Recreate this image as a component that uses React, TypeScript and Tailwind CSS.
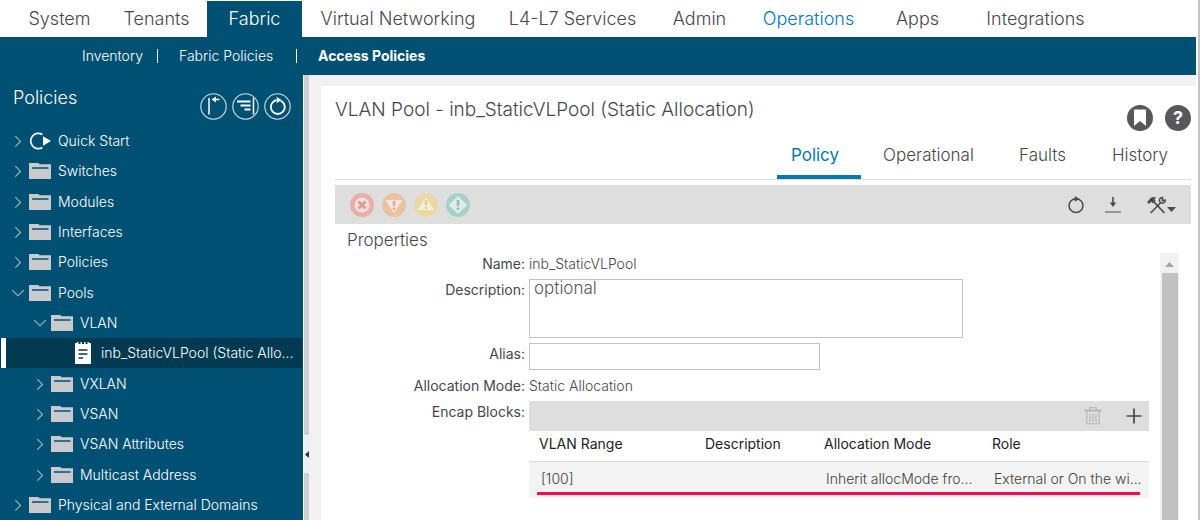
import { Fragment } from 'react'
import type { ReactNode } from 'react'

type TreeItem = {
  label: string
  depth: 0 | 1 | 2
  icon: 'quick' | 'folder' | 'pool'
  open?: boolean
  selected?: boolean
}

const mainMenu = [
  { label: 'System', width: 'w-[93px]' },
  { label: 'Tenants', width: 'w-[101px]' },
  { label: 'Fabric', width: 'w-[95px]', active: true },
  { label: 'Virtual Networking', width: 'w-[192px]' },
  { label: 'L4-L7 Services', width: 'w-[157px]' },
  { label: 'Admin', width: 'w-[97px]' },
  { label: 'Operations', width: 'w-[121px]', hover: true },
  { label: 'Apps', width: 'w-[97px]' },
  { label: 'Integrations', width: 'w-[139px]' },
]

const subMenu = [
  { label: 'Inventory', width: 'w-[62px]' },
  { label: 'Fabric Policies', width: 'w-[104px]' },
  { label: 'Access Policies', width: 'w-28', active: true },
]

const tree: TreeItem[] = [
  { label: 'Quick Start', depth: 0, icon: 'quick' },
  { label: 'Switches', depth: 0, icon: 'folder' },
  { label: 'Modules', depth: 0, icon: 'folder' },
  { label: 'Interfaces', depth: 0, icon: 'folder' },
  { label: 'Policies', depth: 0, icon: 'folder' },
  { label: 'Pools', depth: 0, icon: 'folder', open: true },
  { label: 'VLAN', depth: 1, icon: 'folder', open: true },
  { label: 'inb_StaticVLPool (Static Allo...', depth: 2, icon: 'pool', selected: true },
  { label: 'VXLAN', depth: 1, icon: 'folder' },
  { label: 'VSAN', depth: 1, icon: 'folder' },
  { label: 'VSAN Attributes', depth: 1, icon: 'folder' },
  { label: 'Multicast Address', depth: 1, icon: 'folder' },
  { label: 'Physical and External Domains', depth: 0, icon: 'folder' },
]

const tabs = [
  { label: 'Policy', width: 'w-[84px]', active: true },
  { label: 'Operational', width: 'w-[135px]' },
  { label: 'Faults', width: 'w-[93px]' },
  { label: 'History', width: 'w-[102px]' },
]

const indent = { 0: 'pl-[11px]', 1: 'pl-[33px]', 2: 'pl-[55px]' }

const Chevron = ({ open }: { open?: boolean }) => (
  <svg viewBox="0 0 14 14" className="size-[14px] shrink-0" fill="none" stroke="#a9bcc6" strokeWidth="1.1">
    {open ? <path d="M1.3 4.2 7 9.8l5.7-5.6" /> : <path d="M4.3 2.2 9.5 7.4l-5.2 5.2" />}
  </svg>
)

const FolderIcon = () => (
  <svg viewBox="0 0 22 16" className="h-4 w-[22px] shrink-0">
    <path d="M0 0h9.2l1.6 1.2H22V16H0z" fill="#c9cacd" />
    <path d="M3 5h16.5" stroke="#005073" strokeWidth="1.5" />
  </svg>
)

const QuickStartIcon = () => (
  <svg viewBox="0 0 22 18" className="h-[18px] w-[22px] shrink-0">
    <path d="M13.4 2.4A7.7 7.7 0 1 0 13.4 15.6" fill="none" stroke="#fff" strokeWidth="1.7" />
    <path d="M14 4.2 22 9l-8 4.8z" fill="#fff" />
  </svg>
)

const PoolIcon = () => (
  <svg viewBox="0 0 16 22" className="h-[22px] w-4 shrink-0">
    <path d="M0 1h2V0h1.5v2h2V0H7v2h2V0h1.5v2h2V0H14v1h2v21H0z" fill="#fff" />
    <path d="M3.5 8h9M3.5 12h9M3.5 16h4.5" stroke="#023a52" strokeWidth="1.5" />
  </svg>
)

const treeIcons = { quick: <QuickStartIcon />, folder: <FolderIcon />, pool: <PoolIcon /> }

const RoundIcon = ({ label, children }: { label: string; children: ReactNode }) => (
  <button type="button" aria-label={label} className="size-[27px]">
    <svg viewBox="0 0 27 27" className="size-[27px]" fill="none" stroke="#fff">
      <circle cx="13.5" cy="13.5" r="12.7" strokeWidth="1.1" stroke="#d3dfe5" />
      {children}
    </svg>
  </button>
)

const Severity = ({ label, color, children }: { label: string; color: string; children: ReactNode }) => (
  <button type="button" aria-label={label} className="size-6">
    <svg viewBox="0 0 24 24" className="size-6">
      <circle cx="12" cy="12" r="12" fill={color} />
      {children}
    </svg>
  </button>
)

const Sidebar = () => (
  <aside className="flex w-[303px] shrink-0 flex-col bg-[#005073] text-white">
    <div className="flex h-[51px] items-start pt-[11px] pr-3 pl-[13px]">
      <h2 className="flex-1 text-lg leading-6 font-light">Policies</h2>
      <div className="mt-[7px] flex gap-[5px]">
        <RoundIcon label="Collapse all">
          <path d="M9 5v16.5" strokeWidth="1.5" />
          <path d="M19.5 6.5H13" strokeWidth="1.6" />
          <path d="M11.6 6.5 16 3.6v5.8z" fill="#fff" stroke="none" />
        </RoundIcon>
        <RoundIcon label="Expand to selection">
          <path d="M21.5 5v16.5" strokeWidth="1.5" />
          <path d="M5 8.5h13.5M8.5 12.5h10M12.5 16.5h6" strokeWidth="1.8" />
        </RoundIcon>
        <RoundIcon label="Refresh tree">
          <circle cx="13.8" cy="14" r="7" strokeWidth="1.8" />
          <path d="M12.4 3.4 18 7l-5.6 3.4z" fill="#fff" stroke="#005073" strokeWidth=".5" />
        </RoundIcon>
      </div>
    </div>
    <nav aria-label="Policies" className="grid flex-1 auto-rows-fr">
      {tree.map((item) => (
        <button
          key={item.label}
          type="button"
          aria-expanded={item.icon === 'pool' ? undefined : !!item.open}
          className={
            item.selected
              ? 'relative mr-px flex items-center bg-[#023a52] text-left text-sm'
              : 'flex items-center text-left text-sm'
          }
        >
          {item.selected && <span className="absolute inset-y-0 left-px w-[5px] bg-white"></span>}
          <span className={`${indent[item.depth]} flex flex-1 items-center`}>
            {item.icon === 'pool' ? <span className="w-[14px] shrink-0"></span> : <Chevron open={item.open} />}
            <span className={item.icon === 'pool' ? 'mr-[10px] ml-[6px]' : 'mr-[7px] ml-1'}>{treeIcons[item.icon]}</span>
            <span className="font-light whitespace-nowrap">{item.label}</span>
          </span>
        </button>
      ))}
    </nav>
  </aside>
)

const Splitter = () => (
  <div className="relative w-1.5 shrink-0 border-l border-white bg-[#d0cece]">
    <button
      type="button"
      aria-label="Collapse navigation"
      className="absolute top-[360px] left-0 flex h-[38px] w-[5px] items-center justify-center bg-[#efefef]"
    >
      <svg viewBox="0 0 4 7" className="h-[7px] w-1">
        <path d="M4 0v7L0 3.5z" fill="#333" />
      </svg>
    </button>
  </div>
)

const Toolbar = () => (
  <div className="mt-[5px] flex h-[39px] items-center bg-[#dedede] pr-[15px] pl-[15px]">
    <div className="flex flex-1 gap-2">
      <Severity label="Critical" color="#e8aea8">
        <circle cx="12" cy="12" r="7.4" fill="#ebe3e2" />
        <path d="m8.5 8.5 7 7m0-7-7 7" stroke="#df9c95" strokeWidth="3" />
      </Severity>
      <Severity label="Major" color="#ebc1a0">
        <path d="M3.5 7h17L12 20z" fill="#f0e8e2" />
        <path d="M12 8v5m0 1.5V17" stroke="#e6ae84" strokeWidth="2.6" />
      </Severity>
      <Severity label="Minor" color="#ead9a0">
        <path d="M3.5 17h17L12 4z" fill="#f1ede0" />
        <path d="M12 7v5m0 1.5V16" stroke="#e6cf83" strokeWidth="2.6" />
      </Severity>
      <Severity label="Warning" color="#a5d1c9">
        <path d="m12 3 9 9-9 9-9-9z" fill="#e3ebe9" />
        <path d="M12 7v6m0 1.5V17" stroke="#86c6ba" strokeWidth="2.6" />
      </Severity>
    </div>
    <div className="flex items-center gap-5 text-[#4a4a4c]">
      <button type="button" aria-label="Refresh">
        <svg viewBox="0 0 18 18" className="size-[18px]" fill="none" stroke="currentColor">
          <circle cx="9" cy="9.7" r="6.9" strokeWidth="1.5" />
          <path d="M7.8 0 12.4 2.9 7.8 5.8z" fill="currentColor" stroke="none" />
        </svg>
      </button>
      <button type="button" aria-label="Download">
        <svg viewBox="0 0 16 18" className="h-[18px] w-4">
          <path d="M8 1v7" stroke="currentColor" strokeWidth="1.6" />
          <path d="M4.8 6.5h6.4L8 11z" fill="currentColor" />
          <path d="M0 16h16" stroke="#77787b" strokeWidth="1.4" />
        </svg>
      </button>
      <button type="button" aria-label="Tools" className="ml-1.5 flex items-end">
        <svg viewBox="0 0 20 18" className="h-[18px] w-5" fill="none" stroke="currentColor">
          <path d="M7.2 6.2 17.5 17" strokeWidth="1.7" />
          <path d="M3.6 17 13.4 7" strokeWidth="1.6" />
          <path d="M0 6.2 3.8 1.8Q6.6 .6 9.4 1.4L7.4 3 8.6 4.8 5.6 7.6 4 5.8 2 8z" fill="currentColor" stroke="none" />
          <path d="M15.6 1.4A2.9 2.9 0 1 0 18.2 4.2L15.4 4.6z" strokeWidth="1.5" fill="#dedede" />
        </svg>
        <svg viewBox="0 0 9 5" className="mb-[2px] h-[5px] w-[9px]">
          <path d="M0 0h9L4.5 5z" fill="currentColor" />
        </svg>
      </button>
    </div>
  </div>
)

const EncapBlocks = () => (
  <div className="max-w-[620px]">
    <div className="flex h-[30px] items-center justify-end gap-6 bg-[#dedede] pr-[7px]">
      <button type="button" aria-label="Delete" disabled>
        <svg viewBox="0 0 18 18" className="size-[18px]" fill="none" stroke="#b4b4b6" strokeWidth="1.1">
          <path d="M.5 3.6h17" strokeWidth="2" />
          <path d="M5.8 2.8V.8h6.4v2M2.8 4.5v12.2h12.4V4.5M6 7v8M9 7v8M12 7v8" />
        </svg>
      </button>
      <button type="button" aria-label="Add">
        <svg viewBox="0 0 16 16" className="size-4" stroke="#48484a" strokeWidth="1.7">
          <path d="M8 .5v15M.5 8h15" />
        </svg>
      </button>
    </div>
    <div className="relative">
      <table className="w-full table-fixed text-left text-sm whitespace-nowrap">
        <thead className="text-[#222224]">
          <tr className="h-[30px] border-b border-[#d9d9d9]">
            <th className="w-[166px] pb-[3px] pl-[10px] font-normal">VLAN Range</th>
            <th className="w-[119px] pb-[3px] pl-[10px] font-normal">Description</th>
            <th className="w-[168px] pb-[3px] pl-[10px] font-normal">Allocation Mode</th>
            <th className="pb-[3px] pl-[10px] font-normal">Role</th>
          </tr>
        </thead>
        <tbody className="bg-[#f3f3f3] font-light text-[#3f3f41]">
          <tr className="h-[37px]">
            <td className="pb-[2px] pl-3">[100]</td>
            <td className="pb-[2px] pl-3"></td>
            <td className="pb-[2px] pl-3">Inherit allocMode fro...</td>
            <td className="pb-[2px] pl-3">External or On the wi...</td>
          </tr>
        </tbody>
      </table>
      <span className="absolute right-[9px] bottom-[3px] left-2 h-[3px] bg-[#f8095a]"></span>
    </div>
  </div>
)

const VlanPoolPanel = () => (
  <main className="flex min-w-0 flex-1 flex-col bg-white pr-[5px] pl-[14px]">
    <header className="flex h-12 items-start">
      <h1 className="flex-1 pt-3 text-[19px] leading-6 font-light">VLAN Pool - inb_StaticVLPool (Static Allocation)</h1>
      <div className="mt-[19px] flex gap-3">
        <button type="button" aria-label="Bookmark">
          <svg viewBox="0 0 26 26" className="size-[26px]">
            <circle cx="13" cy="13" r="13" fill="#58585b" />
            <path d="M7 4.5h12V21l-6-5-6 5z" fill="#fff" />
          </svg>
        </button>
        <button
          type="button"
          aria-label="Help"
          className="flex size-[26px] items-center justify-center rounded-full bg-[#58585b] text-lg leading-none font-bold text-white"
        >
          ?
        </button>
      </div>
    </header>

    <div role="tablist" className="flex h-[46px] justify-end border-b border-[#dcdcdc]">
      {tabs.map((tab) => (
        <button
          key={tab.label}
          type="button"
          role="tab"
          aria-selected={!!tab.active}
          className={`${tab.width} pb-[2px] text-[17px] ${
            tab.active ? 'border-b-4 border-[#0479b0] pt-1 pr-2 text-[#0479b0]' : 'font-light'
          }`}
        >
          {tab.label}
        </button>
      ))}
    </div>

    <Toolbar />

    <h2 className="pt-1 pb-px pl-3 text-[17px] leading-6 font-light">Properties</h2>

    <div className="flex flex-1">
      <form className="grid min-w-0 flex-1 auto-rows-min grid-cols-[190px_1fr] gap-x-1 gap-y-[5px] text-sm leading-[21px]">
        <span className="text-right">Name:</span>
        <span className="font-light">inb_StaticVLPool</span>

        <label htmlFor="description" className="text-right">Description:</label>
        <textarea
          id="description"
          placeholder="optional"
          className="h-[59px] max-w-[434px] resize-none border border-[#c2c2c2] px-1 text-[17px] leading-4 font-light placeholder:text-[#58585b]"
        />

        <label htmlFor="alias" className="text-right">Alias:</label>
        <input id="alias" type="text" className="h-[27px] max-w-[291px] border border-[#c2c2c2] px-1" />

        <span className="text-right">Allocation Mode:</span>
        <span className="font-light">Static Allocation</span>

        <span className="text-right">Encap Blocks:</span>
        <EncapBlocks />
      </form>
      <div className="mr-3 flex w-[19px] flex-col items-center bg-[#f1f1f1]">
        <svg viewBox="0 0 9 5" className="mt-[9px] mb-[6px] h-[5px] w-[9px]">
          <path d="M0 5h9L4.5 0z" fill="#a3a3a3" />
        </svg>
        <div className="w-4 flex-1 bg-[#c1c1c1]"></div>
      </div>
    </div>
  </main>
)

const App = () => {
  return (
    <div className="flex min-h-screen flex-col border-r-2 border-[#c4c4c4] bg-white pr-0.5 font-['Inter','Liberation_Sans',sans-serif] text-[#47474a]">
      <nav aria-label="Main" className="flex h-[37px] pt-px pl-[13px] text-lg font-light">
        {mainMenu.map((item) => (
          <a
            key={item.label}
            href="#"
            className={`${item.width} flex shrink-0 items-center justify-center pb-px ${
              item.active ? 'bg-[#005073] text-white' : item.hover ? 'text-[#0479b0]' : ''
            }`}
          >
            {item.label}
          </a>
        ))}
      </nav>

      <nav aria-label="Fabric" className="flex h-[38px] items-center bg-[#005073] pl-[82px] text-sm text-white">
        {subMenu.map((item, i) => (
          <Fragment key={item.label}>
            {i > 0 && <span className="mr-[21px] ml-[13px] h-[14px] w-px bg-white"></span>}
            <a href="#" className={`${item.width} whitespace-nowrap ${item.active ? 'font-bold' : 'font-light'}`}>
              {item.label}
            </a>
          </Fragment>
        ))}
      </nav>

      <div className="flex flex-1">
        <Sidebar />
        <Splitter />
        <div className="flex min-w-0 flex-1 bg-[#f1f1f1] pt-[11px] pl-3">
          <VlanPoolPanel />
        </div>
      </div>
    </div>
  )
}

export default App
